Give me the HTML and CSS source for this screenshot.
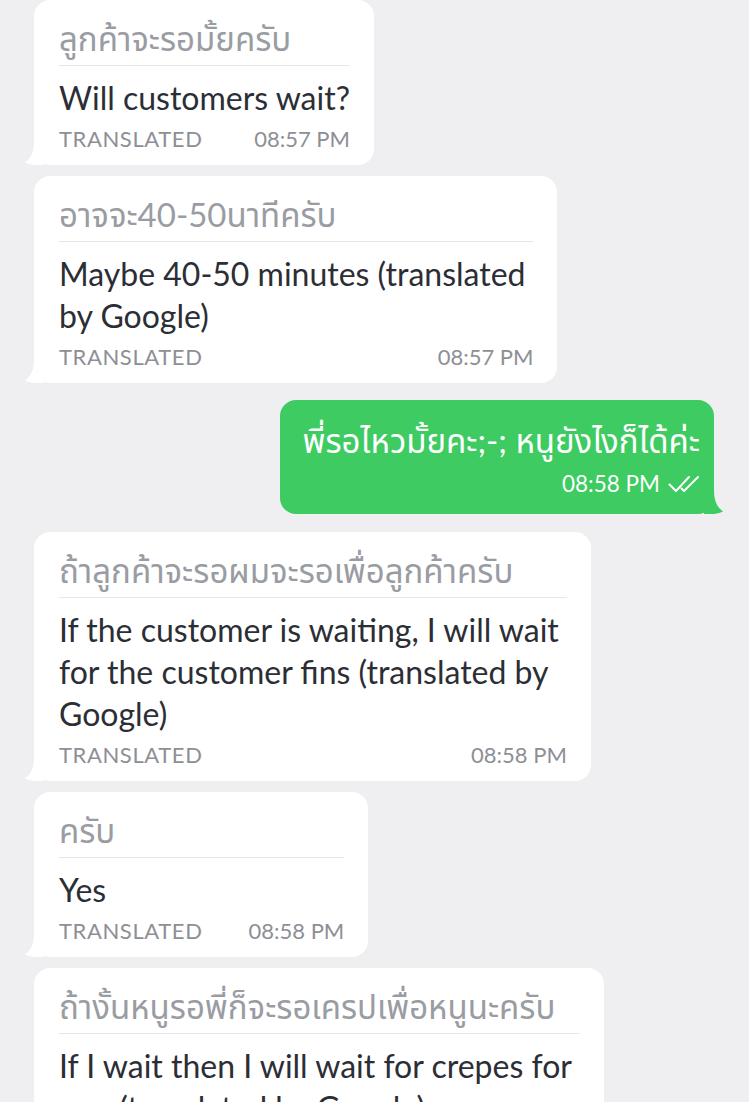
FILE: index.html
```html
<!DOCTYPE html>
<html lang="th">
<head>
<meta charset="utf-8">
<title>Chat</title>
<link rel="stylesheet" href="styles.css">
</head>
<body>
<div class="chat">
  <div class="msg in">
    <div class="bubble">
      <div class="orig">ลูกค้าจะรอมั้ยครับ</div>
      <div class="trans">Will customers wait?</div>
      <div class="meta"><span class="label">TRANSLATED</span><span>08:57 PM</span></div>
      <svg class="tail" width="20" height="24" viewBox="0 0 20 24"><path d="M10 0 L20 0 L20 24 L14 24 C9 24 5 23.5 1 21.5 C7 17 10 11 10 0 Z"/></svg>
    </div>
  </div>
  <div class="msg in">
    <div class="bubble">
      <div class="orig">อาจจะ40-50นาทีครับ</div>
      <div class="trans wrapped">Maybe 40-50 minutes (translated<br>by Google)</div>
      <div class="meta"><span class="label">TRANSLATED</span><span>08:57 PM</span></div>
      <svg class="tail" width="20" height="24" viewBox="0 0 20 24"><path d="M10 0 L20 0 L20 24 L14 24 C9 24 5 23.5 1 21.5 C7 17 10 11 10 0 Z"/></svg>
    </div>
  </div>
  <div class="msg out">
    <div class="bubble">
      <div class="text">พี่รอไหวมั้ยคะ;-; หนูยังไงก็ได้ค่ะ</div>
      <div class="meta"><span>08:58 PM</span>
        <svg class="read" width="32" height="18" viewBox="0 0 32 18"><path d="M1.5 9.5 L8 16 L21 2 M13.5 13.5 L16 16 L30 2"/></svg>
      </div>
      <svg class="tail" width="20" height="24" viewBox="0 0 20 24"><path d="M10 0 L0 0 L0 24 L6 24 C11 24 15 23.5 19 21.5 C13 17 10 11 10 0 Z"/></svg>
    </div>
  </div>
  <div class="msg in">
    <div class="bubble">
      <div class="orig">ถ้าลูกค้าจะรอผมจะรอเพื่อลูกค้าครับ</div>
      <div class="trans wrapped">If the customer is waiting, I will wait<br>for the customer fins (translated by<br>Google)</div>
      <div class="meta"><span class="label">TRANSLATED</span><span>08:58 PM</span></div>
      <svg class="tail" width="20" height="24" viewBox="0 0 20 24"><path d="M10 0 L20 0 L20 24 L14 24 C9 24 5 23.5 1 21.5 C7 17 10 11 10 0 Z"/></svg>
    </div>
  </div>
  <div class="msg in">
    <div class="bubble">
      <div class="orig">ครับ</div>
      <div class="trans">Yes</div>
      <div class="meta"><span class="label">TRANSLATED</span><span>08:58 PM</span></div>
      <svg class="tail" width="20" height="24" viewBox="0 0 20 24"><path d="M10 0 L20 0 L20 24 L14 24 C9 24 5 23.5 1 21.5 C7 17 10 11 10 0 Z"/></svg>
    </div>
  </div>
  <div class="msg in">
    <div class="bubble">
      <div class="orig">ถ้างั้นหนูรอพี่ก็จะรอเครปเพื่อหนูนะครับ</div>
      <div class="trans wrapped">If I wait then I will wait for crepes for<br>you (translated by Google)</div>
      <div class="meta"><span class="label">TRANSLATED</span><span>08:58 PM</span></div>
    </div>
  </div>
</div>
</body>
</html>
```
FILE: styles.css
```css
html, body {
  margin: 0;
  padding: 0;
  background: #efeef1;
}
body {
  font-family: Lato, "Noto Sans Thai", "Noto Sans Thai UI", "Sarabun", "Loma", "Garuda", "Noto Sans", sans-serif;
  height: 1102px;
  overflow: hidden;
}
.chat {
  display: flex;
  flex-direction: column;
  padding: 0 35px 0 34px;
}
.msg {
  display: flex;
  margin-bottom: 11px;
}
.msg.in { justify-content: flex-start; }
.msg.out { justify-content: flex-end; margin-top: 6px; margin-bottom: 18px; }
.bubble {
  position: relative;
  background: #ffffff;
  border-radius: 16px;
  padding: 17px 24px 12px 25px;
  max-width: 600px;
}
.orig {
  font-size: 33px;
  line-height: 42px;
  color: #9a9ca3;
  white-space: nowrap;
  padding-bottom: 6px;
  border-bottom: 1px solid #e7e8eb;
  margin-bottom: 11px;
}
.trans {
  font-size: 32px;
  line-height: 42px;
  color: #2c2e35;
  white-space: nowrap;
}
.trans.wrapped {
  padding-right: 8px;
}
.meta {
  display: flex;
  justify-content: space-between;
  gap: 46px;
  font-size: 22px;
  line-height: 28px;
  color: #8d8f95;
  margin-top: 6px;
}
.label {
  letter-spacing: 0.6px;
}
.tail {
  position: absolute;
  left: -10px;
  bottom: 0;
  fill: #ffffff;
}
.out .bubble {
  background: #3dcb62;
  padding: 19px 14px 16px 23px;
}
.out .text {
  font-size: 33px;
  line-height: 42px;
  color: #ffffff;
  white-space: nowrap;
}
.out .meta {
  justify-content: flex-end;
  align-items: center;
  gap: 8px;
  font-size: 22.5px;
  color: #ffffff;
  margin-top: 9px;
}
.out .tail {
  left: auto;
  right: -10px;
  fill: #3dcb62;
}
.read {
  fill: none;
  stroke: #ffffff;
  stroke-width: 2;
  stroke-linecap: round;
  stroke-linejoin: round;
}
```
